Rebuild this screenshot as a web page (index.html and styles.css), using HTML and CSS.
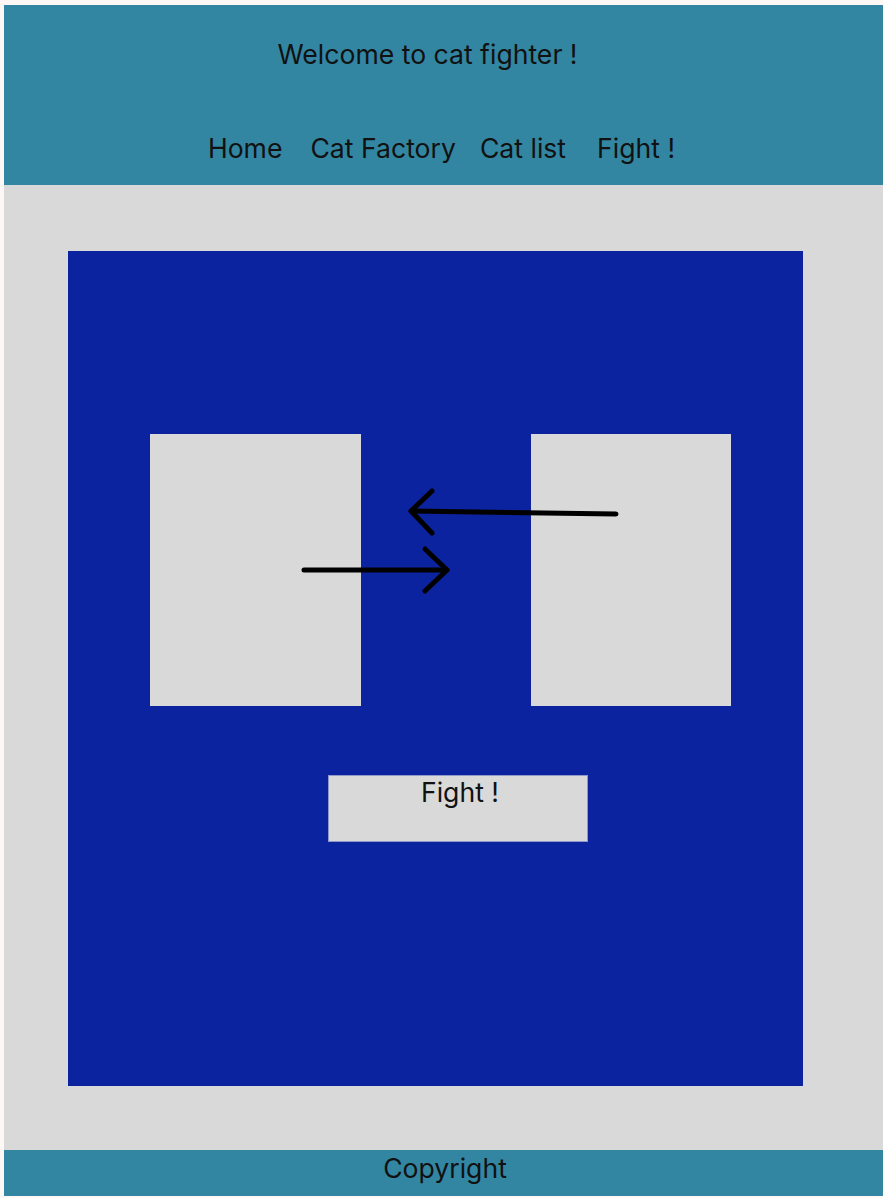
FILE: index.html
```html
<!DOCTYPE html>
<html>
<head>
<meta charset="utf-8">
<link rel="stylesheet" href="styles.css">
</head>
<body>
<div class="page">
  <header class="header">
    <h1 class="title">Welcome to cat fighter !</h1>
    <nav class="nav">
      <a class="nav-home">Home</a>
      <a class="nav-factory">Cat Factory</a>
      <a class="nav-list">Cat list</a>
      <a class="nav-fight">Fight !</a>
    </nav>
  </header>
  <main class="main">
    <section class="arena">
      <div class="fighters">
        <div class="fighter fighter-left"></div>
        <div class="fighter fighter-right"></div>
      </div>
      <div class="action">
        <button class="fight-btn">Fight !</button>
      </div>
      <svg class="arrows" width="735" height="835" viewBox="0 0 735 835">
        <g fill="none" stroke="#000" stroke-width="5" stroke-linecap="round" stroke-linejoin="round">
          <path d="M548 263 L343 260"/>
          <path d="M364 240 L343 260 L364 282"/>
          <path d="M236 319 L379 319"/>
          <path d="M357 298 L379 319 L357 340"/>
        </g>
      </svg>
    </section>
  </main>
  <footer class="footer">Copyright</footer>
</div>
</body>
</html>
```

FILE: styles.css
```css
html, body {
  margin: 0;
  padding: 0;
}
body {
  background: #fdf8f6;
  font-family: Inter, "Noto Sans", sans-serif;
  color: #111;
}
.page {
  margin: 5px 0 2px 4px;
  display: flex;
  flex-direction: column;
}
.header {
  background: #3286a2;
  height: 180px;
  box-sizing: border-box;
  padding-top: 34px;
}
.title {
  margin: 0;
  font-weight: 400;
  font-size: 26.6px;
  line-height: 30px;
  text-align: center;
  padding-right: 32px;
}
.nav {
  display: flex;
  justify-content: center;
  margin-top: 64px;
  font-size: 26.6px;
  line-height: 30px;
  padding-right: 4px;
}
.nav a {
  color: #111;
  text-decoration: none;
}
.nav-home { margin-right: 28px; }
.nav-factory { margin-right: 24px; }
.nav-list { margin-right: 31px; }
.main {
  background: #d9d9d9;
  height: 965px;
  padding-top: 66px;
  box-sizing: border-box;
  padding-left: 64px;
}
.arena {
  position: relative;
  width: 735px;
  height: 835px;
  background: #0c23a0;
  box-sizing: border-box;
  padding-top: 183px;
}
.fighters {
  display: flex;
  gap: 170px;
  padding-left: 82px;
}
.fighter {
  background: #d9d9d9;
  height: 272px;
}
.fighter-left { width: 211px; }
.fighter-right { width: 200px; }
.action {
  padding-left: 260px;
  margin-top: 69px;
}
.fight-btn {
  display: flex;
  justify-content: center;
  align-items: flex-start;
  width: 260px;
  height: 67px;
  background: #d9d9d9;
  border: 1px solid #8f98c8;
  font-family: Inter, "Noto Sans", sans-serif;
  font-size: 26.6px;
  line-height: 30px;
  color: #111;
  padding: 1px 0 0 4px;
  box-sizing: border-box;
}
.arrows {
  position: absolute;
  left: 0;
  top: 0;
  pointer-events: none;
}
.footer {
  background: #3286a2;
  height: 46px;
  font-size: 26.6px;
  line-height: 36px;
  text-align: center;
  padding-left: 3px;
}
```
